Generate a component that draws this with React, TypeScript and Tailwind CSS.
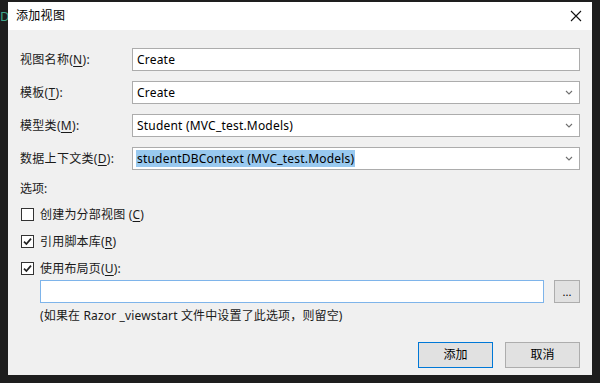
import React from "react";

const font = { fontFamily: '"Noto Sans", "Noto Sans CJK SC", sans-serif' };

function U({ c }: { c: string }) {
  return <span className="underline underline-offset-[2px]">{c}</span>;
}

function Chevron() {
  return (
    <svg width="8" height="5" viewBox="0 0 8 5" className="shrink-0">
      <path d="M1 1 L4 4 L7 1" fill="none" stroke="#707070" strokeWidth="1.1" />
    </svg>
  );
}

function Check() {
  return (
    <svg width="11" height="11" viewBox="0 0 11 11">
      <path d="M2 5.6 L4.4 8 L9 2.6" fill="none" stroke="#222" strokeWidth="1.7" />
    </svg>
  );
}

function Row({ label, children }: { label: React.ReactNode; children: React.ReactNode }) {
  return (
    <div className="flex h-[23px] items-center">
      <div className="w-[112px] shrink-0 text-[12px] tracking-[0.3px] text-[#1a1a1a]">{label}</div>
      {children}
    </div>
  );
}

function Select({ value, highlight }: { value: string; highlight?: boolean }) {
  return (
    <div className="flex h-[23px] flex-1 items-center justify-between border border-[#acacac] bg-white pl-[3px] pr-[6px]">
      <span className={"text-[12px] leading-[17px] tracking-[0.2px] text-black " + (highlight ? "bg-[#99c9ef] px-[1px]" : "px-[1px]")}>{value}</span>
      <Chevron />
    </div>
  );
}

function CheckRow({ checked, children }: { checked?: boolean; children: React.ReactNode }) {
  return (
    <div className="flex h-[17px] items-center">
      <div className="ml-[1px] flex h-[13px] w-[13px] items-center justify-center border border-[#333] bg-white">
        {checked ? <Check /> : null}
      </div>
      <span className="ml-[6px] text-[12px] tracking-[0.2px] text-[#1a1a1a]">{children}</span>
    </div>
  );
}

export default function App() {
  return (
    <div className="flex h-[383px] w-[600px] bg-[#1e1e1e]" style={font}>
      <div className="w-[8px] shrink-0 overflow-hidden pt-[3px]">
        <span className="text-[13px] leading-[16px] text-[#3fa58c]">D</span>
      </div>
      <div className="mt-[2px] flex h-[373px] w-[584px] flex-col bg-[#f0f0f0]">
        <div className="flex h-[28px] items-center justify-between bg-white pl-[8px] pr-[8px]">
          <span className="text-[12px] tracking-[0.3px] text-black">添加视图</span>
          <svg width="12" height="12" viewBox="0 0 12 12" className="mr-[2px]">
            <path d="M1 1 L11 11 M11 1 L1 11" stroke="#111" strokeWidth="1.1" />
          </svg>
        </div>
        <div className="flex flex-1 flex-col px-[12px] pt-[18px]">
          <div className="flex flex-col gap-[10px]">
            <Row label={<>视图名称(<U c="N" />):</>}>
              <div className="flex h-[23px] flex-1 items-center border border-[#acacac] bg-white pl-[4px]">
                <span className="text-[12px] tracking-[0.2px] text-black">Create</span>
              </div>
            </Row>
            <Row label={<>模板(<U c="T" />):</>}>
              <Select value="Create" />
            </Row>
            <Row label={<>模型类(<U c="M" />):</>}>
              <Select value="Student (MVC_test.Models)" />
            </Row>
            <Row label={<>数据上下文类(<U c="D" />):</>}>
              <Select value="studentDBContext (MVC_test.Models)" highlight />
            </Row>
          </div>
          <div className="mt-[11px] h-[16px] text-[12px] leading-[16px] text-[#1a1a1a]">选项:</div>
          <div className="mt-[9px] flex flex-col gap-[10px]">
            <CheckRow>
              创建为分部视图 (<U c="C" />)
            </CheckRow>
            <CheckRow checked>
              引用脚本库(<U c="R" />)
            </CheckRow>
            <CheckRow checked>
              使用布局页(<U c="U" />):
            </CheckRow>
          </div>
          <div className="ml-[20px] mt-[3px] flex h-[23px] items-center gap-[10px]">
            <div className="h-[23px] flex-1 border border-[#7eb4ea] bg-white" />
            <div className="flex h-[23px] w-[26px] items-center justify-center border border-[#adadad] bg-[#e1e1e1] text-[11px] leading-none text-black">
              ...
            </div>
          </div>
          <div className="ml-[20px] mt-[5px] h-[16px] text-[12px] leading-[16px] tracking-[0.15px] text-[#1a1a1a]">
            (如果在 Razor _viewstart 文件中设置了此选项，则留空)
          </div>
          <div className="mt-[18px] flex justify-end gap-[12px]">
            <div className="flex h-[26px] w-[75px] items-center justify-center border border-[#0078d7] bg-[#e1e1e1] text-[12px] text-black">
              添加
            </div>
            <div className="flex h-[26px] w-[75px] items-center justify-center border border-[#adadad] bg-[#e1e1e1] text-[12px] text-black">
              取消
            </div>
          </div>
        </div>
      </div>
      <div className="flex-1" />
    </div>
  );
}
